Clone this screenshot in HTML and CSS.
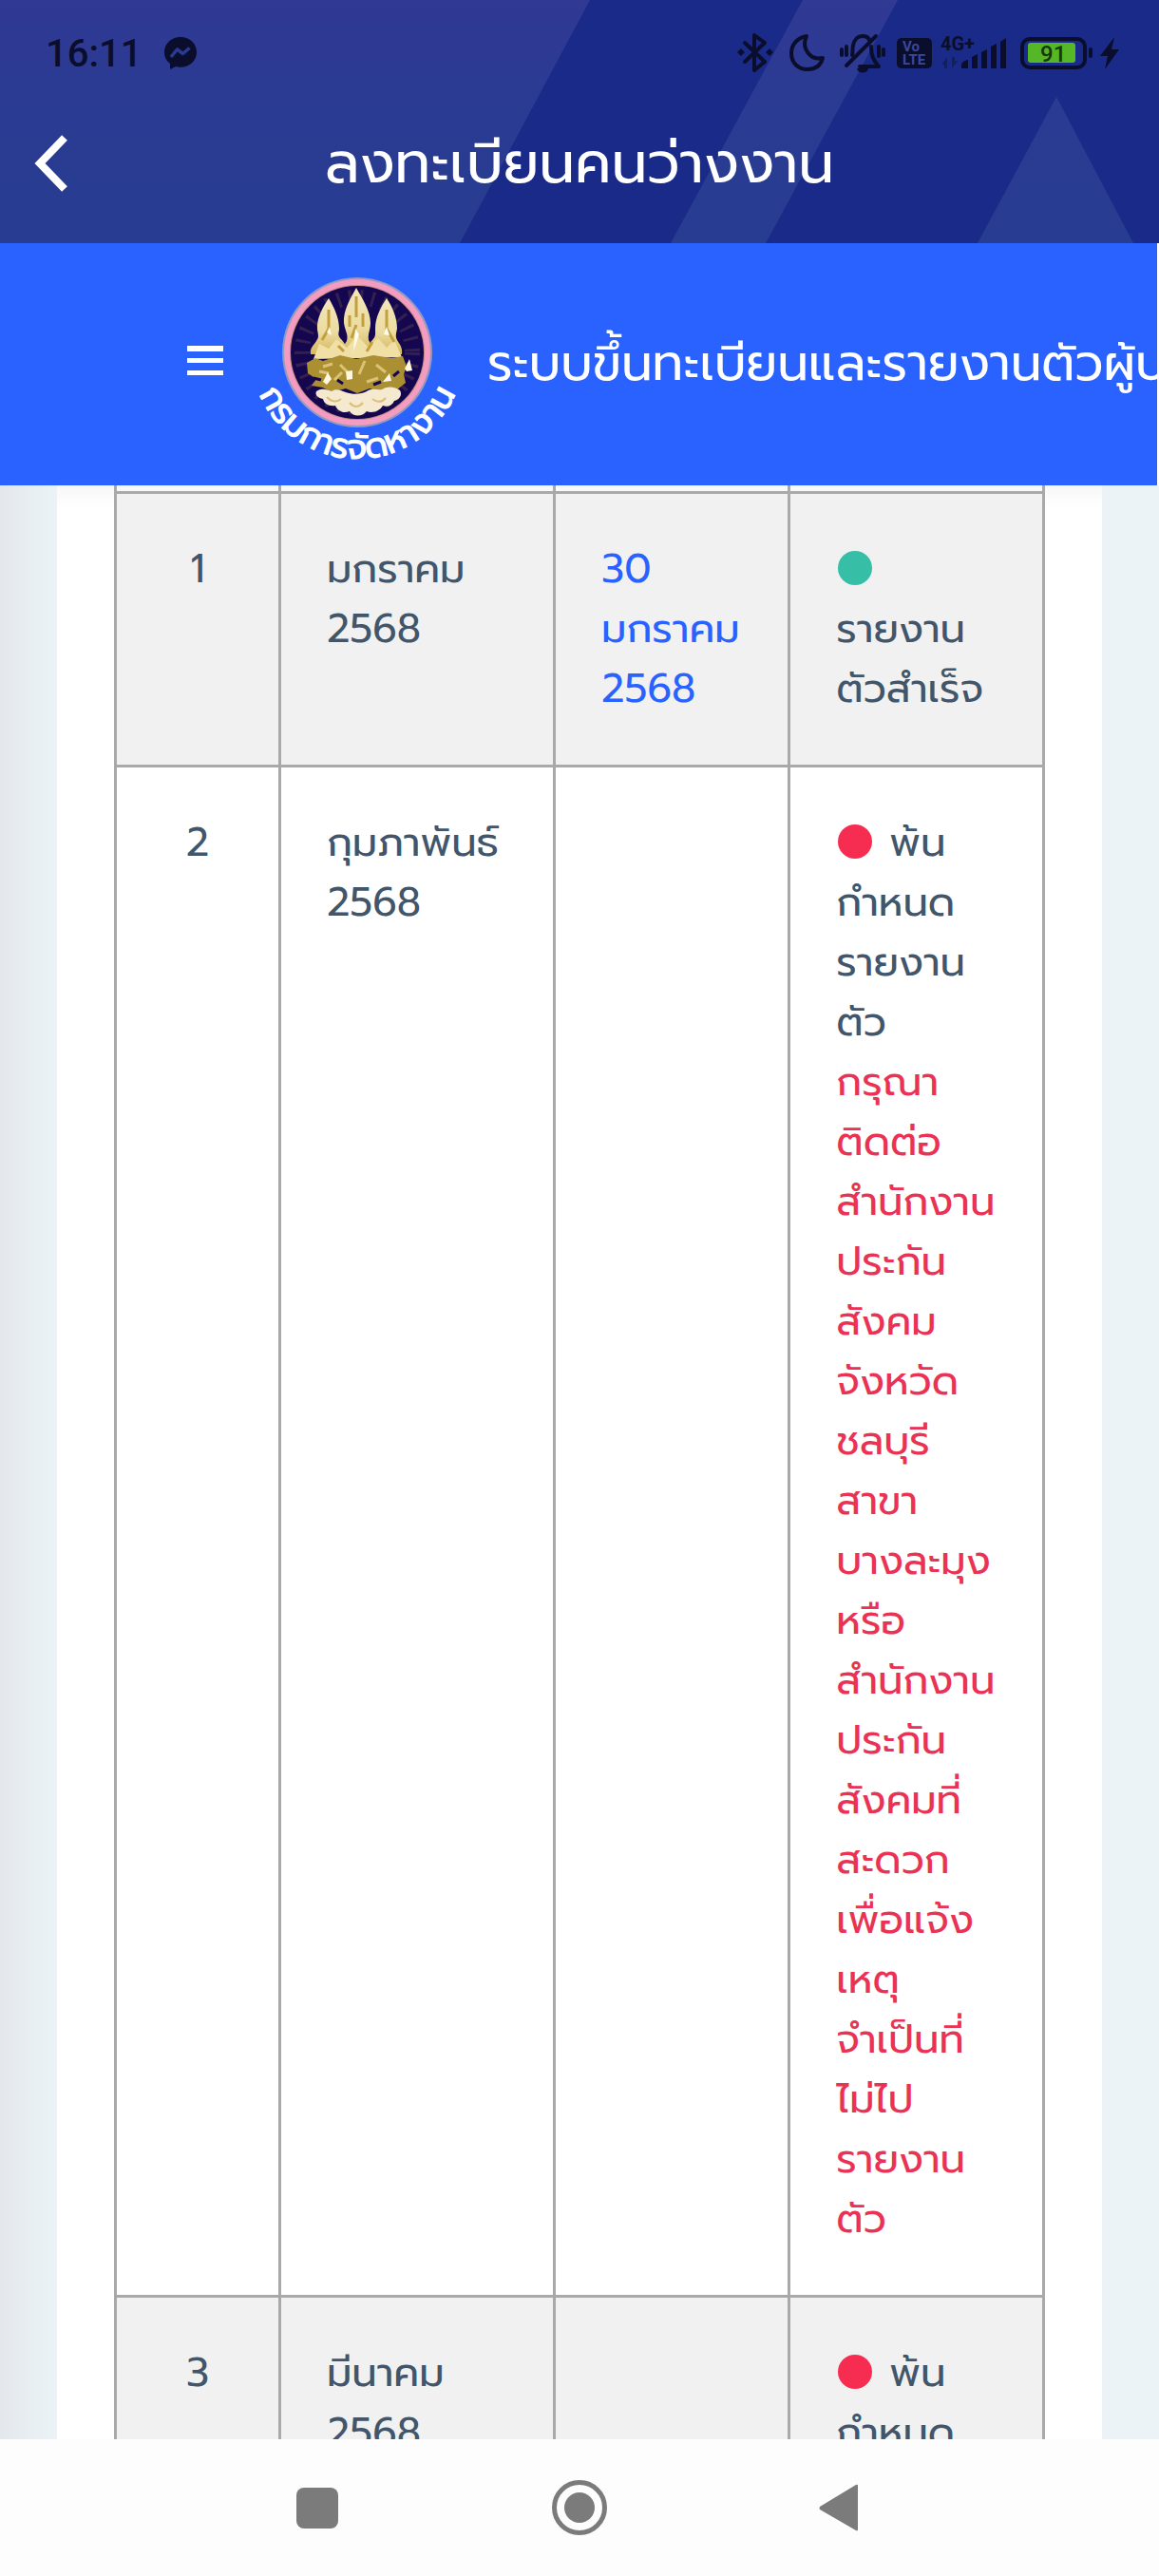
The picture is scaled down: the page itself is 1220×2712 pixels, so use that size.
FILE: index.html
```html
<!DOCTYPE html>
<html lang="th">
<head>
    <meta charset="UTF-8">
    <meta name="viewport" content="width=device-width, initial-scale=1.0">
    <title>ลงทะเบียนคนว่างงาน</title>
    <link rel="stylesheet" href="styles.css">
</head>
<body>
    <header class="app-header">
        <svg class="header-bg" viewBox="0 0 1220 256" preserveAspectRatio="none" aria-hidden="true">
            <defs>
                <linearGradient id="tint" gradientUnits="userSpaceOnUse" x1="0" y1="0" x2="0" y2="256">
                    <stop offset="0" stop-color="#303994"/>
                    <stop offset="0.5" stop-color="#293b92"/>
                    <stop offset="1" stop-color="#273d90"/>
                </linearGradient>
            </defs>
            <path fill="url(#tint)" d="M0 0H621L484 256H0Z M845 0H945L806 256H706Z M1112 102L1193 256H1029Z"/>
        </svg>

        <div class="status-bar">
            <span class="clock">16:11</span>
            <svg class="messenger" width="34" height="34" viewBox="0 0 34 34">
                <path d="M17 0C7 0 0 7 0 16c0 5 2 9 6 12v6l6-3c2 .6 3 .7 5 .7 10 0 17-7 17-15.700S27 0 17 0Z"/>
                <path d="M7 21l6.500-8 6 4.500 7-6" fill="none" stroke="#2a3a93" stroke-width="3.500" stroke-linejoin="round"/>
            </svg>
            <div class="status-icons">
                <svg width="402" height="46" viewBox="778 32 402 46">
                    <!-- bluetooth -->
                    <path class="line" d="M786 44l21 20-11 9V36l11 8-21 20"/>
                    <path d="M782 50l4 4-4 4-4-4zM812 50l4 4-4 4-4-4z"/>
                    <!-- moon -->
                    <path class="line" d="M851 37c-10 2-16 9-16 18 0 10 7 17 17 17 8 0 14-4 16-12-13 3-23-10-17-23z"/>
                    <!-- muted bell -->
                    <path class="line" d="M893 68l31-31M899 57c1-4 0-7 1-10 1-6 5-10 10-10 3 0 6 1 7 4M919 48c0 9 2 14 8 21h-20M888 51v6M893 48v9M927 48v10M932 51v6"/>
                    <path d="M904 71h12c-1 6-11 6-12 0z"/>
                    <!-- volte -->
                    <rect x="946" y="39" width="37" height="32" rx="5"/>
                    <text class="volte" x="952" y="53">Vo</text>
                    <text class="volte" x="952" y="67">LTE</text>
                    <!-- signal -->
                    <text class="network" x="992" y="52">4G+</text>
                    <path class="faded" d="M999 71v-12l-6 8h3v4zM1004 59v12l6-8h-3v-4z"/>
                    <path d="M1014 71v-4q1-4 7-5v9zM1025 71v-12l6-3v15zM1035 71v-17l6-3v20zM1045 71v-23l6-3v26zM1055 71v-28l6-4v32z"/>
                    <!-- battery -->
                    <rect class="line" x="1078" y="40" width="66" height="30" rx="8"/>
                    <rect class="charge" x="1084" y="44" width="50" height="21" rx="3"/>
                    <text class="level" x="1097" y="64">91</text>
                    <rect x="1148" y="49" width="4" height="11" rx="2"/>
                    <path d="M1175 38l-15 20h8l-3 14 15-21h-8z"/>
                </svg>
            </div>
        </div>

        <div class="title-bar">
            <button class="back" aria-label="ย้อนกลับ">
                <svg width="36" height="60" viewBox="0 0 36 60">
                    <path d="M32 3L6 30l26 27" fill="none" stroke="#fff" stroke-width="8"/>
                </svg>
            </button>
            <h1>ลงทะเบียนคนว่างงาน</h1>
        </div>
    </header>

    <nav class="navbar">
        <button class="menu" aria-label="เมนู">
            <svg width="38" height="32" viewBox="0 0 38 32">
                <path fill="#fff" d="M0 0h38v6H0zM0 13h38v5H0zM0 26h38v5H0z"/>
            </svg>
        </button>
        <svg class="logo" width="220" height="210" viewBox="265 279 220 210" role="img" aria-label="กรมการจัดหางาน">
            <defs>
                <path id="ring-text" d="M264 371A112 112 0 0 0 488 371"/>
                <linearGradient id="gold" x1="0" y1="0" x2="0" y2="1">
                    <stop offset="0" stop-color="#f2e6bd"/>
                    <stop offset="0.600" stop-color="#ecdca0"/>
                    <stop offset="1" stop-color="#d3b75c"/>
                </linearGradient>
            </defs>
            <circle cx="376" cy="371" r="79" fill="#8f9cc0"/>
            <circle cx="376" cy="371" r="77" fill="#f39bc0"/>
            <circle cx="376" cy="371" r="71" fill="#b98a78"/>
            <circle cx="376" cy="371" r="70" fill="#150650"/>
            <circle cx="376" cy="371" r="58" fill="none" stroke="#33204f" stroke-width="16" stroke-dasharray="3 9"/>
            <!-- three tiered crowns -->
            <g fill="url(#gold)">
                <path d="M375 303c-6 11-14 24-13 37 1 8 5 12 3 19l-9 14h40l-8-15c-1-7 2-11 2-18 0-13-9-26-15-37z"/>
                <path d="M346 314c-6 9-13 21-12 33 1 6 2 8-1 12-3 5-7 7-6 14h38c1-8-3-13-7-17-3-4-1-6-1-10 0-11-5-22-11-32z"/>
                <path d="M407 314c-6 9-12 20-12 32 0 5 1 8-3 12-4 5-8 9-7 15h38c1-7-2-10-5-15-2-4-1-7 0-12 0-12-5-23-11-32z"/>
            </g>
            <path d="M330 378l6-16 10 5 8-10 11 9 11-13 11 12 11-9 9 10 8-8 8 18z" fill="#f0e0a6"/>
            <path d="M323 382l9-5 8 3 18-6 17 4 18-4 19 3 12-2 4 11-3 8 2 9-10 8-9-3-8 4-11-3-13 5-12-5-15 4-9-5-12-2 5-7-9-6z" fill="#ab8f33"/>
            <path d="M346 393l-10-2M358 384l8 8M384 380l-6 14M396 384l10 8M340 386l10-3M386 402l12-4M352 400l8-8" fill="none" stroke="#dcc373" stroke-width="3"/>
            <path d="M340 402l5-10 4 7-5 6zM364 391l7-1v9l-6 1zM403 402l7-9 2 8zM426 388l5-10 3 12-6 1z" fill="#fff7e0"/>
            <path d="M355 400l6 4M393 405l8-3M330 398l8 2M414 396l6-5" fill="none" stroke="#150650" stroke-width="3"/>
            <!-- cloud base -->
            <path d="M333 412c5-4 12-2 16 0 5-4 11 0 15 1 8 3 16 2 22-1 6-4 12-1 16-2 6-4 14-3 19 1 3 5-1 10-6 11-2 5-7 7-12 5-4 7-12 8-17 6-5 6-14 6-18 0-7 3-13-1-15-6-7 1-12-2-13-7-5-1-9-4-7-8z" fill="#f5ead0"/>
            <path d="M344 418q8 8 15 2M368 424q7 8 14 0M392 420q8 6 14-1" fill="none" stroke="#d9c07a" stroke-width="2"/>
            <path d="M375 312v22M375 342l-5 14M346 326v20l-7 12M407 326v20l8 14M356 364l6 6M392 360l-6 10M368 332v12M382 330v14" fill="none" stroke="#c49f3e" stroke-width="3"/>
            <path d="M374 346l4 6-6 18zM344 350l3-6 2 9zM404 352l3-8 3 9z" fill="#fffdf0"/>
            <text class="ring"><textPath href="#ring-text" startOffset="50%" text-anchor="middle">กรมการจัดหางาน</textPath></text>
        </svg>
        <span class="brand">ระบบขึ้นทะเบียนและรายงานตัวผู้ประกันตน</span>
    </nav>

    <main>
        <div class="card">
            <table>
                <colgroup>
                    <col class="col-no">
                    <col class="col-month">
                    <col class="col-date">
                    <col class="col-status">
                </colgroup>
                <tbody>
                    <tr class="row-edge"><td></td><td></td><td></td><td></td></tr>
                    <tr class="odd">
                        <td class="no">1</td>
                        <td>มกราคม<br>2568</td>
                        <td class="date">30<br>มกราคม<br>2568</td>
                        <td><span class="dot ok"></span><br>รายงาน<br>ตัวสำเร็จ</td>
                    </tr>
                    <tr>
                        <td class="no">2</td>
                        <td>กุมภาพันธ์<br>2568</td>
                        <td></td>
                        <td>
                            <span class="dot late"></span>พ้น<br>กำหนด<br>รายงาน<br>ตัว
                            <div class="notice">กรุณา<br>ติดต่อ<br>สำนักงาน<br>ประกัน<br>สังคม<br>จังหวัด<br>ชลบุรี<br>สาขา<br>บางละมุง<br>หรือ<br>สำนักงาน<br>ประกัน<br>สังคมที่<br>สะดวก<br>เพื่อแจ้ง<br>เหตุ<br>จำเป็นที่<br>ไม่ไป<br>รายงาน<br>ตัว</div>
                        </td>
                    </tr>
                    <tr class="odd">
                        <td class="no">3</td>
                        <td>มีนาคม<br>2568</td>
                        <td></td>
                        <td><span class="dot late"></span>พ้น<br>กำหนด<br>รายงาน<br>ตัว</td>
                    </tr>
                </tbody>
            </table>
        </div>
    </main>

    <footer class="system-nav">
        <button aria-label="แอปล่าสุด">
            <svg width="60" height="60" viewBox="0 0 60 60"><rect x="8" y="9" width="44" height="43" rx="8"/></svg>
        </button>
        <button aria-label="หน้าหลัก">
            <svg width="60" height="60" viewBox="0 0 60 60">
                <circle cx="30" cy="30" r="26.500" fill="none" stroke="#7b7b7b" stroke-width="5"/>
                <circle cx="30" cy="30" r="16"/>
            </svg>
        </button>
        <button aria-label="กลับ">
            <svg width="60" height="60" viewBox="0 0 60 60"><path d="M7 32q-1-1 0-3L45 6q2-1 2 1v46q0 2-2 1z"/></svg>
        </button>
    </footer>
</body>
</html>
```
FILE: styles.css
```css
* {
    box-sizing: border-box;
}

body {
    display: flex;
    flex-direction: column;
    height: 100vh;
    margin: 0;
    overflow: hidden;
    background: #fdfdfd;
    color: #42566b;
    font-family: 'Prompt', 'Noto Sans', 'Noto Sans Thai', sans-serif;
    font-size: 42px;
    line-height: 63px;
}

button {
    display: flex;
    padding: 0;
    border: none;
    background: none;
    cursor: pointer;
}

/* app header */
.app-header {
    position: relative;
    flex: none;
    height: 256px;
    background: #1a2a88;
}

.header-bg {
    position: absolute;
    inset: 0;
    width: 100%;
    height: 100%;
}

.status-bar {
    position: relative;
    display: flex;
    align-items: center;
    gap: 24px;
    height: 112px;
    padding: 0 42px 0 48px;
    color: #0a0e2c;
    fill: #0a0e2c;
}

.clock {
    font-family: Roboto, sans-serif;
    font-size: 40px;
    font-weight: 500;
}

.status-icons {
    display: flex;
    margin-left: auto;
}

.line {
    fill: none;
    stroke: #0a0e2c;
    stroke-width: 4;
    stroke-linecap: round;
    stroke-linejoin: round;
}

.faded {
    opacity: 0.4;
}

.charge {
    fill: #55b725;
}

.volte,
.network,
.level {
    font-family: Roboto, sans-serif;
    font-weight: bold;
}

.volte {
    fill: #3a479c;
    font-size: 15px;
}

.network {
    font-size: 20px;
}

.level {
    fill: #143808;
    font-size: 24px;
    font-weight: 500;
}

.title-bar {
    position: relative;
    display: grid;
    grid-template-columns: 1fr auto 1fr;
    align-items: center;
    height: 120px;
    padding: 0 36px;
    color: #fff;
}

.title-bar h1 {
    margin: 0;
    font-size: 60px;
    font-weight: normal;
}

/* site navbar */
.navbar {
    position: relative;
    z-index: 1;
    display: flex;
    flex: none;
    align-items: center;
    height: 255px;
    margin-right: 2px;
    padding-left: 197px;
    overflow: hidden;
    background: #2962ff;
    color: #fff;
    white-space: nowrap;
}

.menu {
    padding-bottom: 8px;
}

.logo {
    flex: none;
    margin: 0 28px 0 30px;
}

.ring {
    fill: #fff;
    stroke: #fff;
    stroke-width: 1;
    font-size: 36px;
}

.brand {
    padding-bottom: 2px;
    font-size: 52px;
}

/* report table */
main {
    flex: 1;
    min-height: 0;
    padding: 0 60px;
    overflow: hidden;
    background: linear-gradient(90deg, #e4e8ec, #ebf3f7 60px);
}

.card {
    padding: 0 60px;
    background: linear-gradient(#f7f7f7, #fff 24px);
}

table {
    width: 100%;
    border-collapse: collapse;
    table-layout: fixed;
}

.col-no {
    width: 17.7%;
}

.col-month {
    width: 29.6%;
}

.col-date {
    width: 25.3%;
}

.col-status {
    width: 27.4%;
}

td {
    padding: 48px;
    border: 3px solid #a9a9a9;
    vertical-align: top;
    white-space: nowrap;
}

.row-edge td {
    height: 7px;
    padding: 0;
    border-top: none;
}

.odd {
    background: #f1f1f1;
}

.no {
    text-align: center;
}

.date {
    color: #2962ff;
}

.dot {
    display: inline-block;
    width: 36px;
    height: 36px;
    margin: 0 18px 0 2px;
    border-radius: 50%;
    vertical-align: -3px;
}

.ok {
    background: #36bea6;
}

.late {
    background: #f62d51;
}

.notice {
    color: #ea3354;
}

/* system buttons */
.system-nav {
    display: flex;
    flex: none;
    align-items: center;
    justify-content: center;
    gap: 216px;
    height: 144px;
    background: #fdfdfd;
    fill: #7b7b7b;
}
```
